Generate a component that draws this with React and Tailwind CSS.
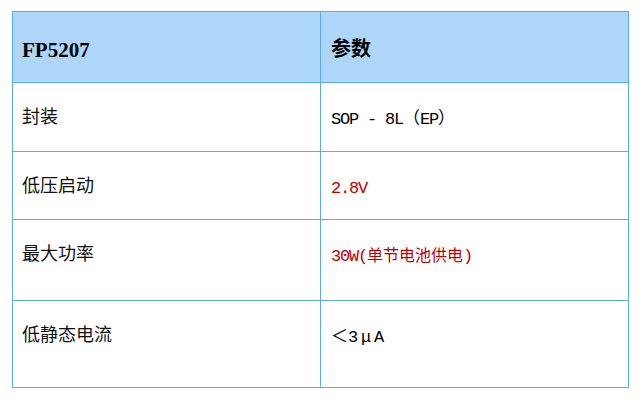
export default function App() {
  const cjk = { fontFamily: '"Noto Sans CJK SC", sans-serif' };
  const mono = { fontFamily: '"Liberation Mono", "Noto Sans CJK SC", monospace' };
  const rows = [
    { k: "封装", h: "h-[69px]", v: <span className="text-black">SOP - 8L<span style={cjk} className="text-[17px] tracking-normal">（</span>EP<span style={cjk} className="text-[17px] tracking-normal">）</span></span> },
    { k: "低压启动", h: "h-[68px]", v: <span className="text-[#c00000]">2.8V</span> },
    { k: "最大功率", h: "h-[81px]", v: <span className="text-[#c00000]">30W(<span style={cjk} className="text-[16px] tracking-normal">单节电池供电</span>)</span> },
    { k: "低静态电流", h: "h-[86px]", v: <span className="text-black"><span style={cjk} className="text-[17px] tracking-normal">＜</span>3<span className="px-[4px]">μ</span>A</span> },
  ];
  return (
    <div className="w-[640px] h-[401px] bg-white pt-[11px] pl-[12px]">
      <div className="w-[617px] border border-[#5aabf3]">
        <div className="grid grid-cols-[308px_1fr] h-[71px] bg-[#add6f8] border-b border-[#5aabf3]">
          <div className="border-r border-[#5aabf3] pl-[9px] pt-[27px]">
            <span className="text-[21px] font-bold leading-[20px] text-black" style={{ fontFamily: '"Liberation Serif", serif' }}>FP5207</span>
          </div>
          <div className="pl-[10px] pt-[25px]">
            <span className="text-[20px] font-bold leading-[22px] text-black" style={cjk}>参数</span>
          </div>
        </div>
        {rows.map((r, i) => (
          <div key={i} className={`grid grid-cols-[308px_1fr] ${r.h} ${i < rows.length - 1 ? "border-b border-[#5aabf3]" : ""}`}>
            <div className="border-r border-[#5aabf3] pl-[9px] pt-[22px]">
              <span className="text-[18px] leading-[20px] text-[#111]" style={cjk}>{r.k}</span>
            </div>
            <div className="pl-[10px] pt-[23px]">
              <span className="text-[17px] leading-[20px] tracking-[-1.2px]" style={mono}>{r.v}</span>
            </div>
          </div>
        ))}
      </div>
    </div>
  );
}
